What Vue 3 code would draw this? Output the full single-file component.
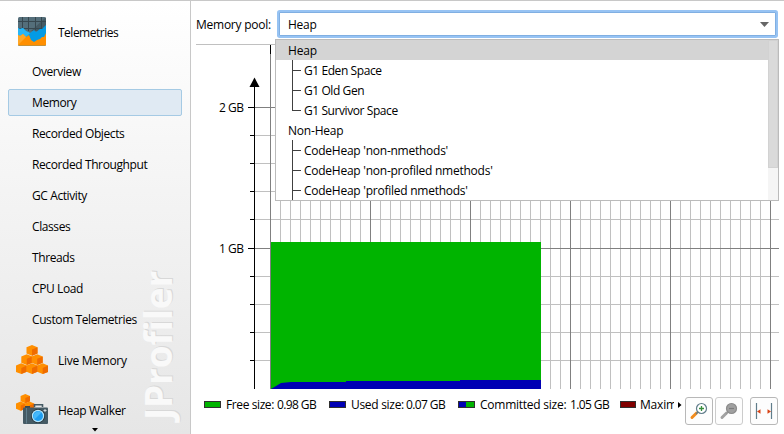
<script setup>
const telemetries = [
  'Overview',
  'Memory',
  'Recorded Objects',
  'Recorded Throughput',
  'GC Activity',
  'Classes',
  'Threads',
  'CPU Load',
  'Custom Telemetries',
]
const pools = [
  { label: 'Heap', root: true },
  { label: 'G1 Eden Space' },
  { label: 'G1 Old Gen' },
  { label: 'G1 Survivor Space', last: true },
  { label: 'Non-Heap', root: true },
  { label: "CodeHeap 'non-nmethods'", code: true },
  { label: "CodeHeap 'non-profiled nmethods'", code: true },
  { label: "CodeHeap 'profiled nmethods'", code: true },
]
const columns = Array.from({ length: 50 }, (_, i) => 80 + (i + 1) * 10)
const minorRows = [91, 119, 147, 175, 232, 260, 288, 316]
const legend = [
  { label: 'Free size:', value: '0.98 GB', kind: 'free' },
  { label: 'Used size:', value: '0.07 GB', kind: 'used' },
  { label: 'Committed size:', value: '1.05 GB', kind: 'committed' },
  { label: 'Maxim', value: '', kind: 'max' },
]
const cubes = [[5.3, 18.3], [26.7, 18.3], [16, 18.3], [10.8, 9.2], [21.2, 9.2], [16, 0]]
const smallCubes = [[4.7, 7.5], [13.5, 7.5], [9.3, 0]]
</script>

<template>
  <div class="app">
    <aside class="sidebar">
      <div class="watermark">JProfiler</div>
      <div class="section first">
        <svg width="32" height="33" viewBox="0 0 32 33">
          <clipPath id="tile"><rect x="2" y="1" width="28" height="28.700" rx="1.500" /></clipPath>
          <g clip-path="url(#tile)">
            <rect width="32" height="32" fill="#546e7a" />
            <path d="M30 1V15H15Z" fill="#455a64" />
            <path d="M6.500 0V13M12.500 0V15M19.500 0V14M25.500 0V12M0 5.500H32M0 12.500H32" stroke="#37474f" stroke-width="1" fill="none" />
            <path d="M0 11L4 13L7 12L10 15L14 17L18 14L20 16L24 13L26 13L30 9V32H0Z" fill="#039be5" />
            <path d="M0 11L4 13L7 12L10 15L14 17L16 15V15L0 31Z" fill="#29b6f6" />
            <path d="M0 18L4 20L7 18L10 21L13 19L15 24L18 26L21 24L24 23L26 21L28 21L30 17V32H0Z" fill="#ff8f00" />
            <path d="M0 18L4 20L7 18L10 21L11 20L0 31Z" fill="#ffa726" />
          </g>
        </svg>
        <span class="t">Telemetries</span>
      </div>
      <div v-for="label in telemetries" :key="label" class="item" :class="{ selected: label === 'Memory' }">
        <span class="t">{{ label }}</span>
      </div>
      <div class="section live">
        <svg width="32" height="33" viewBox="0 -1 32 33">
          <g v-for="(c, i) in cubes" :key="i" :transform="`translate(${c[0]} ${c[1]})`">
            <path d="M0 0L5.500 2.200V8.500L0 10.700L-5.500 8.500V2.200Z" fill="#ff8f00" />
            <path d="M5.500 2.200L0 4.600V10.700L5.500 8.500Z" fill="#ef6c00" />
          </g>
        </svg>
        <span class="t">Live Memory</span>
      </div>
      <div class="section">
        <svg width="32" height="33" viewBox="0 0 32 33">
          <g v-for="(c, i) in smallCubes" :key="i" :transform="`translate(${c[0]} ${c[1]})`">
            <path d="M0 0L4.700 1.900V7.300L0 9.300L-4.700 7.300V1.900Z" fill="#ff8f00" />
            <path d="M4.700 1.900L0 3.900V9.300L4.700 7.300Z" fill="#ef6c00" />
          </g>
          <path d="M18.500 13V10.800H26.500V13" fill="none" stroke="#455a64" stroke-width="1.600" />
          <rect x="9" y="12" width="5" height="2" fill="#37474f" />
          <rect x="7" y="13.500" width="25" height="16.500" rx="1" fill="#455a64" />
          <path d="M10.500 14V29.500" stroke="#607d8b" />
          <path d="M29 15V18M27.500 16.500H30.500" stroke="#cfd8dc" />
          <circle cx="22" cy="22" r="7" fill="#263238" />
          <circle cx="22" cy="22" r="6.200" fill="#b3e5fc" />
          <circle cx="22" cy="22" r="5" fill="#1e9df0" />
          <path d="M18.500 25.500A5 5 0 0 1 25.500 18.500Z" fill="#45b8fa" />
        </svg>
        <span class="t">Heap Walker</span>
      </div>
      <svg class="more" width="6" height="4" viewBox="0 0 6 4"><path d="M0 0H6L3 3.500Z" fill="#000" /></svg>
    </aside>

    <main class="content">
      <div class="toolbar">
        <label class="pool-label t">Memory pool:</label>
        <div class="combo">
          <span class="t">Heap</span>
          <svg width="9" height="5" viewBox="0 0 9 5"><path d="M0 0H9L4.500 5Z" fill="#666" /></svg>
          <div class="popup">
            <div class="options">
              <div v-for="p in pools" :key="p.label" class="option" :class="{ root: p.root, last: p.last, code: p.code, active: p.label === 'Heap' }">
                <span class="t">{{ p.label }}</span>
              </div>
            </div>
            <div class="track"><div class="thumb"></div></div>
          </div>
        </div>
      </div>

      <svg class="chart" width="593" height="345" viewBox="0 0 593 345" shape-rendering="crispEdges">
        <rect x="5" y="0" width="583" height="1" fill="#c0c0c0" />
        <rect v-for="y in minorRows" :key="y" x="64" :y="y" width="524" height="1" fill="#c0c0c0" />
        <rect v-for="x in columns" :key="'c' + x" :x="x - 1" y="1" width="1" height="344" :fill="(x - 80) % 100 ? '#c0c0c0' : '#808080'" />
        <rect x="64" y="63" width="524" height="1" fill="#808080" />
        <rect x="64" y="204" width="524" height="1" fill="#808080" />
        <rect x="79" y="1" width="1" height="344" fill="#808080" />
        <rect x="79" y="1" width="1" height="9" fill="#000" />
        <rect x="80" y="198" width="270" height="147" fill="#00b400" />
        <path d="M80 345L90 339L100 338H155V337H269V336H350V345Z" fill="#0000b4" shape-rendering="auto" />
        <rect x="63" y="40" width="1" height="305" fill="#000" />
        <path d="M63.500 33.500L68.500 43H58.500Z" fill="#000" shape-rendering="auto" />
        <rect v-for="y in minorRows" :key="'t' + y" x="59" :y="y" width="4" height="1" fill="#000" />
        <rect x="57" y="63" width="7" height="1" fill="#000" />
        <rect x="57" y="204" width="7" height="1" fill="#000" />
        <text x="28" y="68">2 GB</text>
        <text x="28" y="209">1 GB</text>
      </svg>

      <footer class="footer">
        <div class="legend">
          <div v-for="l in legend" :key="l.kind" class="entry" :class="l.kind">
            <i class="swatch"></i><span class="t name">{{ l.label }}</span><span class="t value">{{ l.value }}</span>
          </div>
        </div>
        <svg class="next" width="4" height="6" viewBox="0 0 4 6"><path d="M0 0L3.500 3L0 6Z" fill="#000" /></svg>
        <div class="buttons">
          <button class="btn">
            <svg width="26" height="26" viewBox="0 0 26 26">
              <path d="M10.300 15.200L6 19.500" stroke="#f28c1e" stroke-width="3" stroke-linecap="round" />
              <path d="M10 16L12 14" stroke="#607d8b" stroke-width="1.500" />
              <circle cx="15.500" cy="10.500" r="5" fill="#fff" stroke="#607d8b" stroke-width="1.200" />
              <path d="M15.500 8V13M13 10.500H18" stroke="#388e3c" stroke-width="1.300" />
            </svg>
          </button>
          <button class="btn disabled">
            <svg width="26" height="26" viewBox="0 0 26 26">
              <path d="M10.300 15.200L6 19.500" stroke="#a3a3a3" stroke-width="3" stroke-linecap="round" />
              <path d="M10 16L12 14" stroke="#999" stroke-width="1.500" />
              <circle cx="15.500" cy="10.500" r="5" fill="#a0a0a0" stroke="#8c8c8c" stroke-width="1.200" />
              <path d="M13 10.500H18" stroke="#7c7c7c" stroke-width="1.200" />
            </svg>
          </button>
          <button class="btn fit">
            <svg width="26" height="26" viewBox="0 0 26 26">
              <path d="M5.500 5V21M20.500 5V21" stroke="#607d8b" stroke-width="1.200" />
              <path d="M6 13.500L9.500 11.300V15.700ZM20 13.500L16.500 11.300V15.700Z" fill="#d84315" />
            </svg>
          </button>
        </div>
      </footer>
    </main>
  </div>
</template>

<style>
body { background: #fff; overflow: hidden; }
</style>

<style scoped>
.app {
  box-sizing: border-box;
  display: flex;
  width: 784px;
  height: 434px;
  overflow: hidden;
  border-top: 1px solid #c8c8c8;
  font: 12px/17px "Open Sans", "Noto Sans", sans-serif;
  letter-spacing: -0.25px;
  color: #000;
  background: #fff;
}
.t { white-space: pre; }
.sidebar {
  position: relative;
  box-sizing: border-box;
  flex: 0 0 191px;
  height: 433px;
  overflow: hidden;
  border-right: 1px solid #c8c8c8;
  background: linear-gradient(#fff, #e6e6e6);
}
.watermark {
  position: absolute;
  left: 136px;
  bottom: 14px;
  writing-mode: vertical-rl;
  transform: rotate(180deg);
  font-weight: 700;
  font-size: 37px;
  line-height: 44px;
  letter-spacing: -0.2px;
  color: #f9f9f9;
  text-shadow: 1px 1px 0 #d8d8d8;
}
.section {
  position: relative;
  box-sizing: border-box;
  display: flex;
  align-items: center;
  gap: 10px;
  height: 50px;
  padding: 1px 0 0 16px;
  letter-spacing: -0.35px;
}
.section.first { height: 48px; margin-top: 7px; letter-spacing: -0.5px; }
.section.live { letter-spacing: -0.3px; }
.item {
  position: relative;
  display: flex;
  align-items: center;
  height: 31px;
  padding-left: 32px;
  letter-spacing: -0.4px;
}
.item.selected {
  box-sizing: border-box;
  height: 27px;
  margin: 2px 8px;
  padding-left: 23px;
  border: 1px solid #a5cae4;
  border-radius: 2px;
  background: #e0eaf3;
}
.more { position: absolute; left: 92px; top: 427px; }
.content { flex: 1; display: flex; flex-direction: column; min-width: 0; }
.toolbar { display: flex; height: 43px; padding-left: 5px; box-sizing: border-box; flex: none; }
.pool-label { width: 81px; padding-top: 15px; box-sizing: border-box; }
.combo {
  position: relative;
  display: flex;
  align-items: center;
  justify-content: space-between;
  box-sizing: border-box;
  width: 497px;
  height: 24px;
  margin: 11px 0 0 2px;
  padding: 1px 6px 0 8px;
  border: 1px solid #80afe2;
  border-radius: 1px;
  box-shadow: 0 0 0 2px #97c3f3;
  background: #fff;
}
.popup {
  position: absolute;
  left: -5px;
  top: 26px;
  display: flex;
  box-sizing: border-box;
  width: 504px;
  height: 162px;
  border: 1px solid #bbb;
  background: #fff;
}
.options { flex: 1; overflow: hidden; }
.option {
  position: relative;
  display: flex;
  align-items: center;
  height: 20px;
  padding: 2px 0 1px 28px;
  box-sizing: border-box;
  letter-spacing: -0.42px;
}
.option.root { padding-left: 12px; letter-spacing: -0.2px; }
.option.code { letter-spacing: -0.25px; }
.option.active { background: #d4d4d4; }
.option:not(.root)::before {
  content: "";
  position: absolute;
  left: 16px;
  top: 0;
  width: 1px;
  height: 20px;
  background: #404040;
}
.option.last::before { height: 11px; }
.option:not(.root)::after {
  content: "";
  position: absolute;
  left: 16px;
  top: 10px;
  width: 9px;
  height: 1px;
  background: #404040;
}
.track { width: 10px; background: #f5f5f5; }
.thumb { box-sizing: border-box; height: 128px; border: 1px solid #d2d2d2; background: #dadada; }
.chart { flex: none; display: block; }
.footer { display: flex; height: 45px; }
.legend { display: flex; align-items: center; width: 483px; height: 31px; padding-left: 13px; box-sizing: border-box; overflow: hidden; }
.entry { display: flex; align-items: center; flex: none; }
.free { width: 125px; }
.used { width: 129px; }
.committed { width: 162px; }
.name { width: 51px; letter-spacing: -0.4px; }
.used .name { width: 55px; letter-spacing: -0.3px; }
.committed .name { width: 90px; letter-spacing: -0.25px; }
.max .name { width: auto; letter-spacing: -0.2px; }
.value { letter-spacing: -0.6px; }
.swatch { box-sizing: border-box; width: 17px; height: 7px; margin-right: 5px; border: 1px solid #303030; background: #00b400; }
.used .swatch { background: #0000b4; }
.committed .swatch { background: linear-gradient(90deg, #0000b4 50%, #00b400 50%); }
.max .swatch { background: #800000; width: 16px; margin-right: 4px; }
.next { margin: 13px 7px 0 4px; flex: none; width: 4px; }
.buttons { display: flex; margin: 8px 0 0 -4px; }
.btn {
  box-sizing: border-box;
  width: 28px;
  height: 28px;
  margin: 0 2px 0 0;
  padding: 0;
  border: 1px solid #b8b8b8;
  border-radius: 3px;
  background: #fdfdfd;
}
.btn svg { display: block; }
.btn.disabled { border-color: #ccc; }
.btn.fit { margin-left: 5px; }
text { font-size: 12px; fill: #000; letter-spacing: -0.5px; }
</style>
